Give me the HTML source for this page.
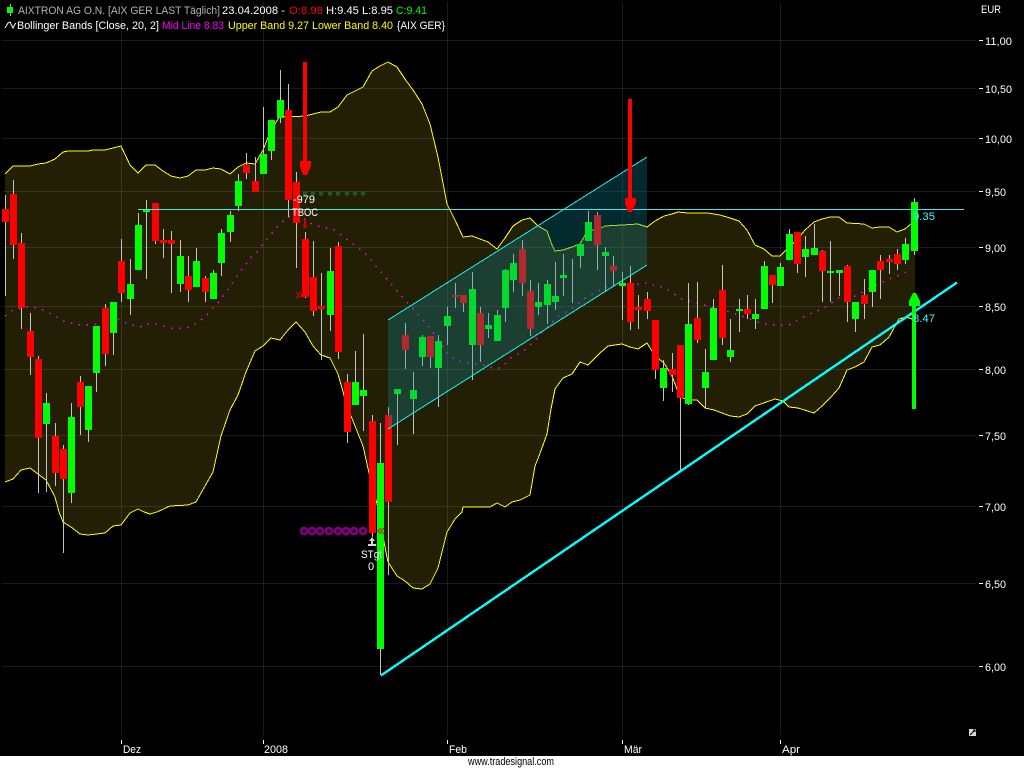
<!DOCTYPE html>
<html lang="de">
<head>
<meta charset="utf-8">
<title>AIXTRON AG O.N.</title>
<style>
html,body{margin:0;padding:0;background:#000;width:1024px;height:768px;overflow:hidden}
svg{display:block}
text{font-family:"Liberation Sans",sans-serif;font-size:11px;fill:#fff}
</style>
</head>
<body>
<svg width="1024" height="768" viewBox="0 0 1024 768" xmlns="http://www.w3.org/2000/svg">
<rect width="1024" height="768" fill="#000"/>

<!-- band fill -->
<path fill="#231f05" d="M5 174L13 166L30 166L38 164L46 163L55 159L63 152L68 151L88 151L93 150L105 150L113 148L121 146L130 165L138 173L146 165L155 165L163 171L171 176L180 178L188 176L196 170L205 170L213 168L221 169L230 174L238 167L246 163L255 164L263 150L271 130L280 116L288 117L305 116L321 112L330 112L338 107L347 95L355 91L363 87L372 71L380 66L388 62L397 67L405 79L413 90L422 104L430 124L438 157L447 204L455 220L463 237L472 236L480 239L488 242L497 249L505 238L513 226L522 220L530 218L538 226L547 231L552 245L555 251L563 250L572 247L580 244L588 230L597 230L605 226L622 225L638 224L647 227L655 221L664 216L672 214L678 212L688 213L708 213L720 215L730 218L739 221L747 230L755 245L764 249L772 256L780 256L789 247L797 240L805 230L814 222L822 219L830 217L839 217L847 223L864 224L872 228L880 227L889 227L897 232L905 229L912 223L915 219L915 319L912 319L906 317L899 319L889 337L880 345L872 347L864 362L855 367L847 370L839 388L831 397L822 406L814 413L798 408L789 407L783 401L775 399L755 406L747 414L739 417L730 416L714 410L705 408L697 400L689 400L680 397L672 376L664 363L655 356L647 343L638 349L630 347L622 344L608 346L600 353L588 365L580 362L572 374L563 378L555 389L551 409L547 434L539 456L535 466L530 495L520 500L512 502L505 507L497 503L490 507L463 507L462 512L455 519L447 532L438 568L430 584L422 589L413 588L405 581L397 576L388 562L384 542L380 515L372 485L369 473L363 446L355 426L347 406L338 374L330 358L321 355L313 346L305 332L296 322L288 330L280 340L271 338L263 346L255 351L246 372L238 395L230 410L221 436L213 472L205 486L196 502L188 505L170 506L157 512L150 514L144 512L138 509L130 513L121 525L113 526L105 533L88 535L80 534L71 527L63 522L59 512L55 497L46 480L38 474L30 468L21 470L13 479L5 482Z"/>

<!-- grid -->
<g stroke="#fff" stroke-opacity=".1" stroke-width="1" shape-rendering="crispEdges" fill="none">
<path d="M2 40.5H976M2 88.5H976M2 138.5H976M2 191.5H976M2 247.5H976M2 306.5H976M2 369.5H976M2 435.5H976M2 506.5H976M2 583.5H976M2 666.5H976"/>
<path d="M121.5 2V735M263.5 2V735M447.5 2V735M622.5 2V735M780.5 2V735"/>
</g>

<!-- band lines -->
<g fill="none" stroke="#ffff00" stroke-width="1" shape-rendering="crispEdges">
<path d="M5 174L13 166L30 166L38 164L46 163L55 159L63 152L68 151L88 151L93 150L105 150L113 148L121 146L130 165L138 173L146 165L155 165L163 171L171 176L180 178L188 176L196 170L205 170L213 168L221 169L230 174L238 167L246 163L255 164L263 150L271 130L280 116L288 117L305 116L321 112L330 112L338 107L347 95L355 91L363 87L372 71L380 66L388 62L397 67L405 79L413 90L422 104L430 124L438 157L447 204L455 220L463 237L472 236L480 239L488 242L497 249L505 238L513 226L522 220L530 218L538 226L547 231L552 245L555 251L563 250L572 247L580 244L588 230L597 230L605 226L622 225L638 224L647 227L655 221L664 216L672 214L678 212L688 213L708 213L720 215L730 218L739 221L747 230L755 245L764 249L772 256L780 256L789 247L797 240L805 230L814 222L822 219L830 217L839 217L847 223L864 224L872 228L880 227L889 227L897 232L905 229L912 223L915 219"/>
<path d="M5 482L13 479L21 470L30 468L38 474L46 480L55 497L59 512L63 522L71 527L80 534L88 535L105 533L113 526L121 525L130 513L138 509L144 512L150 514L157 512L170 506L188 505L196 502L205 486L213 472L221 436L230 410L238 395L246 372L255 351L263 346L271 338L280 340L288 330L296 322L305 332L313 346L321 355L330 358L338 374L347 406L355 426L363 446L369 473L372 485L380 515L384 542L388 562L397 576L405 581L413 588L422 589L430 584L438 568L447 532L455 519L462 512L463 507L490 507L497 503L505 507L512 502L520 500L530 495L535 466L539 456L547 434L551 409L555 389L563 378L572 374L580 362L588 365L600 353L608 346L622 344L630 347L638 349L647 343L655 356L664 363L672 376L680 397L689 400L697 400L705 408L714 410L730 416L739 417L747 414L755 406L775 399L783 401L789 407L798 408L814 413L822 406L831 397L839 388L847 370L855 367L864 362L872 347L880 345L889 337L899 319L906 317L912 319"/>
</g>

<!-- mid line -->
<path fill="none" stroke="#ff00ff" stroke-width="1.5" stroke-dasharray="1.5 6.5" shape-rendering="crispEdges" d="M5 316L13 310L30 306L46 311L63 321L80 325L100 324L118 319L128 324L140 327L147 324L155 324L170 328L187 328L197 323L207 315L217 304L227 291L235 279L242 269L252 256L257 252L263 244L277 227L288 217L302 217L313 225L335 230L350 242L364 252L370 259L387 279L403 298L417 313L427 324L432 331L447 353L457 361L470 363L483 365L497 369L503 366L509 359L526 349L538 337L557 317L573 308L585 298L597 292L605 287L618 284L635 285L645 283L662 287L672 292L679 298L704 305L727 311L747 318L760 323L775 325L789 325L805 316L822 309L839 298L855 296L874 286L889 279L900 275L912 269"/>

<!-- wicks -->
<path fill="none" stroke="#c4c4c4" stroke-width="1" shape-rendering="crispEdges" d="M5.5 195V296M13.5 180V259M21.5 233V329M30.5 313V375M38.5 356V493M46.5 393V492M55.5 423V486M63.5 445V553M71.5 403V503M80.5 376V435M88.5 386V442M96.5 326V392M105.5 304V366M113.5 302V355M121.5 239V302M130.5 259V315M138.5 213V270M146.5 200V279M155.5 203V244M163.5 229V258M171.5 231V293M180.5 240V292M188.5 256V302M196.5 248V287M205.5 276V302M213.5 270V299M221.5 229V276M230.5 211V242M238.5 174V211M246.5 153V179M255.5 157V192M263.5 107V174M271.5 120V160M280.5 70V123M288.5 84V217M296.5 172V268M305.5 232V298M313.5 241V316M321.5 273V360M330.5 248V331M338.5 242V359M347.5 374V443M355.5 351V405M363.5 334V431M372.5 415V537M380.5 423V675M388.5 407V575M397.5 389V445M405.5 323V369M413.5 372V434M422.5 335V366M430.5 336V368M438.5 335V407M447.5 307V345M455.5 283V308M463.5 295V312M472.5 272V380M480.5 307V362M488.5 313V338M497.5 310V341M505.5 269V322M513.5 254V292M522.5 240V296M530.5 280V336M538.5 283V315M547.5 280V324M555.5 262V310M563.5 254V296M572.5 259V303M580.5 244V268M588.5 211V241M597.5 212V270M605.5 247V292M613.5 256V286M622.5 272V320M630.5 266V330M638.5 295V329M647.5 292V319M655.5 320V379M663.5 360V401M672.5 353V392M680.5 345V470M688.5 283V405M697.5 282V343M705.5 349V408M713.5 299V360M722.5 265V345M730.5 319V362M739.5 299V332M747.5 295V319M755.5 299V329M764.5 261V309M772.5 275V303M780.5 263V286M789.5 229V260M797.5 232V273M805.5 236V277M814.5 224V255M822.5 250V302M830.5 241V302M839.5 270V296M847.5 265V322M855.5 302V332M864.5 279V319M872.5 270V307M880.5 255V299M889.5 255V274M897.5 249V270M905.5 238V264M914.5 198V255"/>

<!-- red bodies -->
<path fill="#ff0000" shape-rendering="crispEdges" d="M2 209h7V222H2zM10 194h7V245H10zM18 243h7V308H18zM27 331h7V357H27zM35 359h7V438H35zM52 436h7V473H52zM60 449h7V479H60zM77 382h7V407H77zM102 308h7V354H102zM118 261h7V293H118zM152 203h7V241H152zM160 240h7V243H160zM168 240h7V244H168zM185 276h7V290H185zM202 278h7V292H202zM243 165h7V173H243zM252 181h7V192H252zM285 110h7V200H285zM293 182h7V223H293zM302 239h7V297H302zM310 277h7V311H310zM318 306h7V309H318zM335 246h7V352H335zM344 382h7V432H344zM369 421h7V533H369zM385 415h7V502H385zM402 335h7V350H402zM427 336h7V357H427zM452 295h7V297H452zM460 295h7V303H460zM477 313h7V345H477zM519 249h7V283H519zM527 291h7V329H527zM594 215h7V245H594zM610 266h7V271H610zM627 283h7V322H627zM635 307h7V310H635zM644 299h7V311H644zM652 320h7V370H652zM669 369h7V375H669zM677 345h7V398H677zM694 318h7V340H694zM719 290h7V338H719zM744 309h7V314H744zM769 275h7V285H769zM794 232h7V264H794zM819 251h7V271H819zM844 266h7V302H844zM861 295h7V304H861zM877 261h7V270H877zM886 259h7V262H886zM894 254h7V264H894z"/>

<!-- green bodies -->
<path fill="#00ff00" shape-rendering="crispEdges" d="M43 403h7V424H43zM68 417h7V493H68zM85 386h7V430H85zM93 326h7V373H93zM110 302h7V333H110zM127 284h7V299H127zM135 225h7V270H135zM143 210h7V212H143zM177 256h7V284H177zM193 261h7V287H193zM210 273h7V299H210zM218 233h7V263H218zM227 215h7V232H227zM235 181h7V206H235zM260 154h7V174H260zM268 120h7V151H268zM277 100h7V118H277zM327 271h7V315H327zM352 382h7V405H352zM360 390h7V396H360zM377 463h7V649H377zM394 389h7V394H394zM410 390h7V399H410zM419 337h7V357H419zM435 341h7V368H435zM444 316h7V326H444zM469 289h7V345H469zM485 325h7V329H485zM494 315h7V341H494zM502 270h7V308H502zM510 263h7V280H510zM535 302h7V307H535zM544 284h7V305H544zM552 296h7V302H552zM560 275h7V278H560zM577 244h7V256H577zM585 222h7V241H585zM602 252h7V256H602zM619 283h7V286H619zM660 368h7V388H660zM685 324h7V404H685zM702 372h7V388H702zM710 308h7V360H710zM727 350h7V357H727zM736 309h7V311H736zM752 314h7V319H752zM761 266h7V309H761zM777 267h7V286H777zM786 234h7V260H786zM802 249h7V257H802zM811 248h7V255H811zM827 271h7V273H827zM836 270h7V273H836zM852 302h7V319H852zM869 270h7V292H869zM902 244h7V260H902zM911 202h7V251H911z"/>

<!-- channel -->
<polygon points="388,320 647,157 647,265 388,429" fill="rgb(10,135,150)" fill-opacity=".31" shape-rendering="crispEdges"/>
<g stroke="#19f0f0" stroke-width="1" fill="none" shape-rendering="crispEdges">
<path d="M388 320L647 157"/>
<path d="M388 429L647 265"/>
</g>

<!-- horizontal line -->
<path d="M138 209.5H964" stroke="#3fe6e6" stroke-width="1" shape-rendering="crispEdges"/>

<!-- trend line -->
<path d="M381 675.5L957 282.5" stroke="#00ffff" stroke-width="2.4" fill="none" shape-rendering="crispEdges"/>

<!-- big arrows -->
<g shape-rendering="crispEdges" fill="#ff0000">
<polygon points="303,62 307,62 307,161 311,161 311,166 307,175 303,175 300,166 300,161 303,161"/>
<polygon points="628,99 632,99 632,198 636,198 636,203 632,212 628,212 625,203 625,198 628,198"/>
<polygon fill="#00ff00" points="913,293 916,293 920,301 920,306 916,306 916,409 912,409 912,306 909,306 909,301"/>
</g>

<!-- signal markers -->
<g fill="#800080" stroke="#0c6a1c" stroke-width="1.5">
<circle cx="305" cy="193.5" r="1.5"/><circle cx="313" cy="193.5" r="1.5"/><circle cx="321" cy="193.5" r="1.5"/><circle cx="330" cy="193.5" r="1.5"/><circle cx="338" cy="193.5" r="1.5"/><circle cx="347" cy="193.5" r="1.5"/><circle cx="355" cy="193.5" r="1.5"/><circle cx="363" cy="193.5" r="1.5"/>
</g>
<g fill="none" stroke="#800080" stroke-width="2.8">
<circle cx="304" cy="531" r="3"/><circle cx="312" cy="531" r="3"/><circle cx="320" cy="531" r="3"/><circle cx="329" cy="531" r="3"/><circle cx="338" cy="531" r="3"/><circle cx="346" cy="531" r="3"/><circle cx="354" cy="531" r="3"/><circle cx="363" cy="531" r="3"/>
</g>
<polygon fill="#cc0000" points="304,220 306,220 306,225 308,225 305,229 302,225 304,225"/>
<path d="M296 292l3 3-3 3M299 292l3 3-3 3" fill="none" stroke="#e00000" stroke-width="1"/>
<path d="M381 528l-3 3 3 3M384 528l-3 3 3 3" fill="none" stroke="#e00000" stroke-width="1"/>
<polygon fill="#d8d8d8" points="372,537 375,541 373,541 373,544 376,544 376,546 368,546 368,544 371,544 371,541 369,541"/>

<!-- chart labels -->
<text x="293" y="203" textLength="22" lengthAdjust="spacingAndGlyphs">-979</text>
<text x="292" y="216" textLength="26" lengthAdjust="spacingAndGlyphs">TBOC</text>
<text x="361" y="558" textLength="21" lengthAdjust="spacingAndGlyphs">STgt</text>
<text x="368" y="570">0</text>
<text x="913" y="220" textLength="22" lengthAdjust="spacingAndGlyphs" style="fill:#33ffff">9.35</text>
<text x="913" y="322" textLength="22" lengthAdjust="spacingAndGlyphs" style="fill:#33ffff">8.47</text>

<!-- legend -->
<path d="M10.5 4V16" stroke="#aaa" stroke-width="1" shape-rendering="crispEdges"/>
<rect x="7" y="7" width="6" height="6" fill="#00ff00" shape-rendering="crispEdges"/>
<path d="M5 28L8 23L10 22L12 26L13 28L15 24L16 23" fill="none" stroke="#fff" stroke-width="1"/>
<text x="18" y="14" textLength="202" lengthAdjust="spacingAndGlyphs" style="fill:#b4b4b4">AIXTRON AG O.N. [AIX GER LAST Täglich]</text>
<text x="222" y="14" textLength="63" lengthAdjust="spacingAndGlyphs">23.04.2008 -</text>
<text x="289" y="14" textLength="34" lengthAdjust="spacingAndGlyphs" style="fill:#ff0000">O:8.98</text>
<text x="326" y="14" textLength="67" lengthAdjust="spacingAndGlyphs">H:9.45 L:8.95</text>
<text x="396" y="14" textLength="31" lengthAdjust="spacingAndGlyphs" style="fill:#00ff00">C:9.41</text>
<text x="17" y="29" textLength="142" lengthAdjust="spacingAndGlyphs">Bollinger Bands [Close, 20, 2]</text>
<text x="162" y="29" textLength="62" lengthAdjust="spacingAndGlyphs" style="fill:#ff00ff">Mid Line 8.83</text>
<text x="228" y="29" textLength="165" lengthAdjust="spacingAndGlyphs" style="fill:#ffff00">Upper Band 9.27 Lower Band 8.40</text>
<text x="397" y="29" textLength="48" lengthAdjust="spacingAndGlyphs">{AIX GER}</text>

<!-- price axis -->
<text x="981" y="13" textLength="20" lengthAdjust="spacingAndGlyphs">EUR</text>
<path d="M979 40.5h4M979 88.5h4M979 138.5h4M979 191.5h4M979 247.5h4M979 306.5h4M979 369.5h4M979 435.5h4M979 506.5h4M979 583.5h4M979 666.5h4" stroke="#fff" stroke-width="1" shape-rendering="crispEdges"/>
<text x="985" y="45" textLength="27" lengthAdjust="spacingAndGlyphs">11,00</text>
<text x="985" y="93" textLength="27" lengthAdjust="spacingAndGlyphs">10,50</text>
<text x="985" y="143" textLength="27" lengthAdjust="spacingAndGlyphs">10,00</text>
<text x="985" y="196" textLength="21" lengthAdjust="spacingAndGlyphs">9,50</text>
<text x="985" y="252" textLength="21" lengthAdjust="spacingAndGlyphs">9,00</text>
<text x="985" y="311" textLength="21" lengthAdjust="spacingAndGlyphs">8,50</text>
<text x="985" y="374" textLength="21" lengthAdjust="spacingAndGlyphs">8,00</text>
<text x="985" y="440" textLength="21" lengthAdjust="spacingAndGlyphs">7,50</text>
<text x="985" y="511" textLength="21" lengthAdjust="spacingAndGlyphs">7,00</text>
<text x="985" y="588" textLength="21" lengthAdjust="spacingAndGlyphs">6,50</text>
<text x="985" y="671" textLength="21" lengthAdjust="spacingAndGlyphs">6,00</text>

<!-- time axis -->
<path d="M121.5 740v4M263.5 740v4M447.5 740v4M622.5 740v4M780.5 740v4" stroke="#fff" stroke-width="1" shape-rendering="crispEdges"/>
<text x="123" y="753" textLength="18" lengthAdjust="spacingAndGlyphs">Dez</text>
<text x="264" y="753" textLength="24" lengthAdjust="spacingAndGlyphs">2008</text>
<text x="449" y="753" textLength="18" lengthAdjust="spacingAndGlyphs">Feb</text>
<text x="624" y="753" textLength="18" lengthAdjust="spacingAndGlyphs">Mär</text>
<text x="782" y="753" textLength="18" lengthAdjust="spacingAndGlyphs">Apr</text>

<!-- corner icon -->
<rect x="969" y="729" width="7" height="7" fill="#d8d8d8" shape-rendering="crispEdges"/>
<path d="M970 735L975 730M973 730h2v2" stroke="#000" stroke-width="1" fill="none"/>

<!-- footer -->
<rect x="0" y="756" width="1024" height="12" fill="#fff"/>
<text x="468" y="765" textLength="86" lengthAdjust="spacingAndGlyphs" style="fill:#000">www.tradesignal.com</text>
</svg>
</body>
</html>
